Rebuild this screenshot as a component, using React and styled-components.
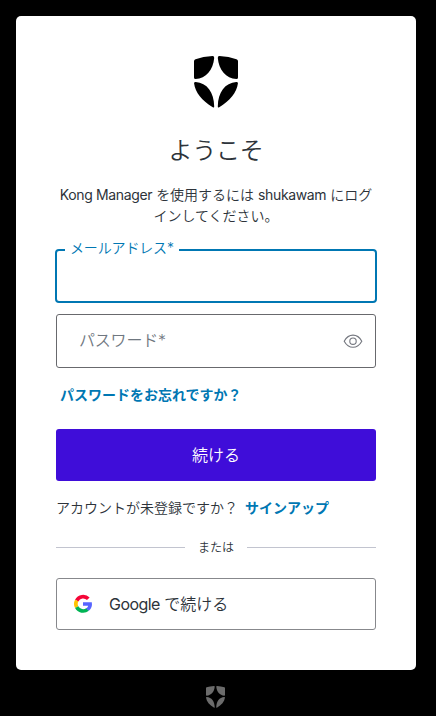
import React from "react";
import styled, { createGlobalStyle } from "styled-components";

const GlobalStyle = createGlobalStyle`
  * { box-sizing: border-box; }
  body {
    margin: 0;
    background: #000;
    color: #2d333a;
    font-family: Inter, "Noto Sans CJK JP", sans-serif;
    font-size: 14px;
    line-height: 21px;
  }
`;

const Page = styled.main`
  display: flex;
  flex-direction: column;
  height: 716px;
  padding: 16px 0 0 16px;
  overflow: hidden;
  background: #000;
`;

const Card = styled.section`
  width: 400px;
  height: 654px;
  padding: 40px;
  border-radius: 5px;
  background: #fff;
  display: flex;
  flex-direction: column;
`;

const Shield = styled.svg`
  display: block;
  align-self: center;
  flex: none;
  width: ${(p) => p.$width}px;
  height: ${(p) => p.$height}px;
  fill: ${(p) => p.$color};
`;

const Title = styled.h1`
  margin: 25px 0 0;
  height: 36px;
  line-height: 36px;
  font-size: 24px;
  font-weight: 350;
  letter-spacing: -0.3px;
  text-align: center;
`;

const Description = styled.p`
  margin: 15px 0 0;
  text-align: center;
  font-weight: 350;
  white-space: nowrap;
`;

const Latin = styled.span`
  font-weight: 400;
  letter-spacing: ${(p) => p.$spacing || "-0.36px"};
`;

const FocusedField = styled.fieldset`
  width: 322px;
  height: 62px;
  margin: 15px -1px 0;
  padding: 0 0 0 8px;
  border: 2px solid #0077b3;
  border-radius: 4px;
`;

const FieldLabel = styled.legend`
  height: 18px;
  padding: 0 5px 0 5px;
  line-height: 14px;
  font-size: 14px;
  font-weight: 350;
  letter-spacing: -0.15px;
  color: #0077b3;
`;

const EmailInput = styled.input`
  width: 290px;
  height: 30px;
  padding: 0;
  border: 0;
  outline: 0;
`;

const PasswordField = styled.div`
  display: flex;
  align-items: center;
  justify-content: space-between;
  height: 54px;
  margin-top: 11px;
  padding: 0 12px 2px 22px;
  border: 1px solid #68696d;
  border-radius: 3px;
  font-size: 16px;
  font-weight: 350;
  letter-spacing: -0.2px;
  color: #6f7780;
`;

const TextLink = styled.a`
  font-weight: 700;
  color: #0077b3;
`;

const ForgotRow = styled.div`
  margin-top: 16px;
  padding-left: 4px;
`;

const PrimaryButton = styled.button`
  height: 52px;
  margin-top: 24px;
  padding: 0;
  border: 0;
  border-radius: 3px;
  background: #3f0dd9;
  color: #fff;
  font: 350 16px/52px Inter, "Noto Sans CJK JP", sans-serif;
`;

const SignupRow = styled.div`
  display: flex;
  gap: 7px;
  margin-top: 16px;
  font-weight: 350;
`;

const Divider = styled.div`
  display: flex;
  align-items: center;
  gap: 13px;
  height: 20px;
  margin-top: 19px;
  font-size: 12px;
  font-weight: 350;

  &::before,
  &::after {
    content: "";
    flex: 1;
    height: 1px;
    background: #c2c4cf;
  }
`;

const GoogleButton = styled.button`
  display: flex;
  align-items: center;
  gap: 16px;
  height: 52px;
  margin-top: 21px;
  padding: 0 16px;
  border: 1px solid #87888c;
  border-radius: 3px;
  background: #fff;
  color: #2d333a;
  font: 350 16px/24px Inter, "Noto Sans CJK JP", sans-serif;
`;

const Footer = styled.footer`
  width: 399px;
  margin-top: 16px;
  display: flex;
  justify-content: center;
`;

function Logo({ width, height, color }) {
  return (
    <Shield $width={width} $height={height} $color={color} viewBox="0 0 44 52" preserveAspectRatio="none" aria-hidden="true">
      <path d="M0 5.2Q0 3.8 1.5 3.2Q9 .3 18.6 0Q20.4 0 20.2 2C19.2 14 12 22.4 1.6 23Q0 23 0 21.5Z" />
      <path d="M44 5.2Q44 3.8 42.5 3.2Q35 .3 25.4 0Q23.6 0 23.8 2C24.8 14 32 22.4 42.4 23Q44 23 44 21.5Z" />
      <path d="M1.7 26C13 27 20 36 20.2 50.5Q20.2 52.2 18.8 51.3C8 44.5 1.2 36.5 .1 27.5Q-.1 25.9 1.7 26Z" />
      <path d="M42.3 26C31 27 24 36 23.8 50.5Q23.8 52.2 25.2 51.3C36 44.5 42.8 36.5 43.9 27.5Q44.1 25.9 42.3 26Z" />
    </Shield>
  );
}

function Eye() {
  return (
    <svg width="20" height="20" viewBox="0 0 20 20" fill="none" stroke="#74777f" strokeWidth="1.1" aria-hidden="true">
      <path d="M1.2 11.2C3.4 7.2 6.2 5.1 10 5.1S16.6 7.2 18.8 11.2C16.6 15.2 13.8 17.3 10 17.3S3.4 15.2 1.2 11.2Z" />
      <circle cx="10" cy="11.2" r="3.2" />
    </svg>
  );
}

function GoogleMark() {
  return (
    <svg width="20" height="20" viewBox="0 0 20 20" fill="none" strokeWidth="3.7" aria-hidden="true">
      <path stroke="#f50537" d="M15.3 4.8A7.2 7.2 0 0 0 3.7 6.6" />
      <path stroke="#ffc400" d="M3.7 6.5A7.2 7.2 0 0 0 3.7 13.2" />
      <path stroke="#00b454" d="M3.7 13.1A7.2 7.2 0 0 0 14.7 15.3" />
      <path fill="#5865ff" d="M10 8.2H18.8Q19.7 13.4 15.9 16.8L13 14.5Q14.9 13.4 15.2 11.8H10Z" />
    </svg>
  );
}

export default function App() {
  return (
    <>
      <GlobalStyle />
      <Page>
        <Card>
          <Logo width={44} height={52} color="#000" />
          <Title>ようこそ</Title>
          <Description>
            <Latin>Kong Manager</Latin> を使用するには <Latin>shukawam</Latin> にログ
            <br />
            インしてください。
          </Description>
          <FocusedField>
            <FieldLabel>メールアドレス*</FieldLabel>
            <EmailInput aria-label="メールアドレス" />
          </FocusedField>
          <PasswordField>
            パスワード*
            <Eye />
          </PasswordField>
          <ForgotRow>
            <TextLink>パスワードをお忘れですか？</TextLink>
          </ForgotRow>
          <PrimaryButton>続ける</PrimaryButton>
          <SignupRow>
            <span>アカウントが未登録ですか？</span>
            <TextLink>サインアップ</TextLink>
          </SignupRow>
          <Divider>または</Divider>
          <GoogleButton>
            <GoogleMark />
            <span><Latin $spacing="-0.55px">Google</Latin> で続ける</span>
          </GoogleButton>
        </Card>
        <Footer>
          <Logo width={19} height={22} color="#6b6b6b" />
        </Footer>
      </Page>
    </>
  );
}
